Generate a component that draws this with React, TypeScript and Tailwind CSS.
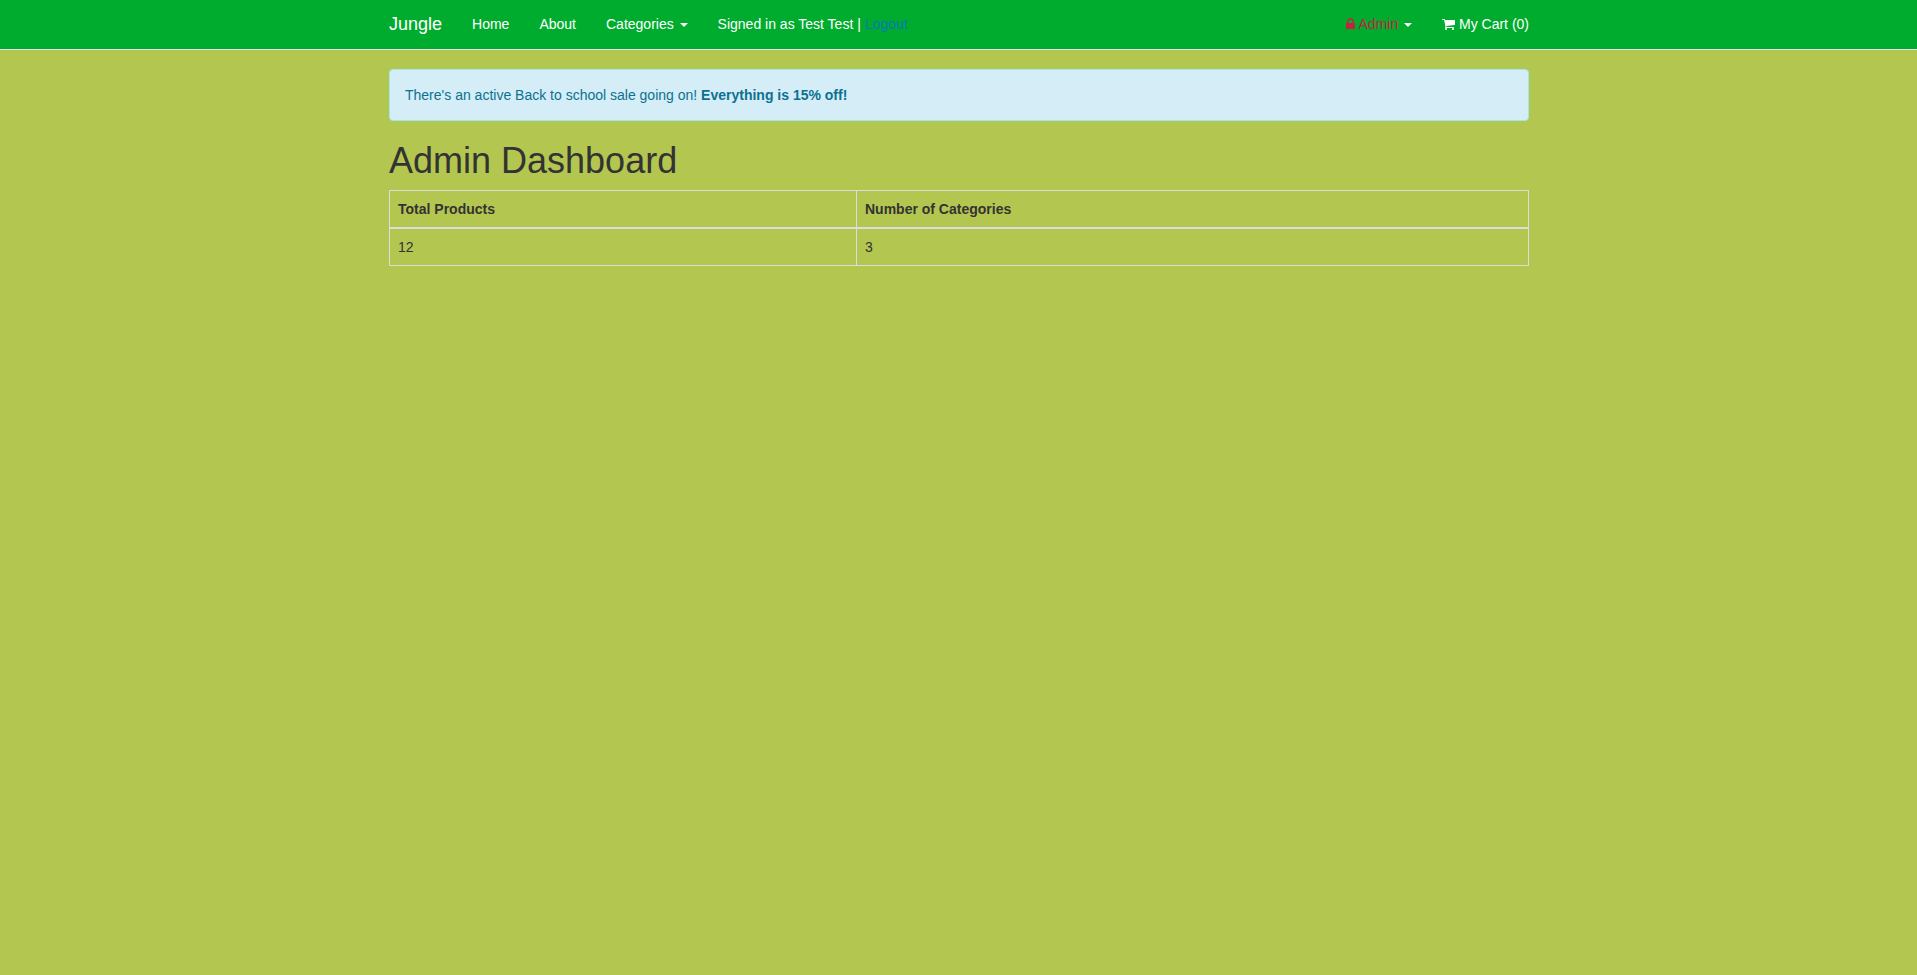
import React from "react";

function Caret() {
  return (
    <span
      aria-hidden="true"
      className="ml-0.5 inline-block h-0 w-0 border-x-4 border-t-4 border-x-transparent border-t-white align-middle"
    />
  );
}

function LockIcon() {
  return (
    <svg aria-hidden="true" viewBox="320 0 1152 1792" className="inline-block h-3.5 w-[9px] fill-current align-[-2px]">
      <path d="M640 768h512v-192q0-106-75-181t-181-75-181 75-75 181v192zm832 96v576q0 40-28 68t-68 28h-960q-40 0-68-28t-28-68v-576q0-40 28-68t68-28h32v-192q0-184 132-316t316-132 316 132 132 316v192h32q40 0 68 28t28 68z" />
    </svg>
  );
}

function CartIcon() {
  return (
    <svg aria-hidden="true" viewBox="64 0 1664 1792" className="inline-block h-3.5 w-[13px] fill-current align-[-2px]">
      <path d="M704 1536q0 52-38 90t-90 38-90-38-38-90 38-90 90-38 90 38 38 90zm896 0q0 52-38 90t-90 38-90-38-38-90 38-90 90-38 90 38 38 90zm128-1088v512q0 24-16.5 42.5t-40.5 21.5l-1044 122q13 60 13 70 0 16-24 64h920q26 0 45 19t19 45-19 45-45 19h-1024q-26 0-45-19t-19-45q0-11 8-31.5t16-36 21.5-40 15.5-29.5l-177-823h-204q-26 0-45-19t-19-45 19-45 45-19h256q16 0 28.5 6.5t19.5 15.5 13 24.5 8 26 5.5 29.5 4.5 26h1201q26 0 45 19t19 45z" />
    </svg>
  );
}

const container = "mx-auto w-full max-w-[1171px] pl-4 pr-[15px]";

export default function App() {
  return (
    <div className="min-h-screen bg-[#b3c650] font-['Liberation_Sans',Arial,sans-serif] text-sm leading-5 text-[#333333]">
      <nav className="border-b border-[#e7e7e7] bg-[#00ac2e] text-white">
        <div className={container + " flex items-center justify-between pt-3.5 pb-[15px]"}>
          <div className="flex items-center">
            <a href="#" className="mr-[15px] text-lg leading-5">Jungle</a>
            <a href="#" className="px-[15px]">Home</a>
            <a href="#" className="px-[15px]">About</a>
            <button type="button" className="px-[15px]">
              Categories <Caret />
            </button>
            <p className="px-[15px]">
              Signed in as Test Test |{" "}
              <a href="#" className="text-[#0079ba]">Logout</a>
            </p>
          </div>
          <div className="flex items-center">
            <button type="button" className="px-[15px]">
              <span className="text-[#c2233f]">
                <LockIcon /> Admin
              </span>{" "}
              <Caret />
            </button>
            <a href="#" className="pl-[15px]">
              <CartIcon /> My Cart (0)
            </a>
          </div>
        </div>
      </nav>

      <main className={container + " pt-[19px]"}>
        <div role="status" className="mb-5 rounded border border-[#9ee8f1] bg-[#d4edf6] p-[15px] text-[#0c7191]">
          There's an active Back to school sale going on! <strong>Everything is 15% off!</strong>
        </div>
        <h1 className="mb-2.5 text-4xl leading-[39px]">Admin Dashboard</h1>
        <table className="w-full border-collapse border border-[#dddddd] text-left">
          <thead>
            <tr>
              <th className="w-[41%] border border-b-2 border-[#dddddd] p-2">Total Products</th>
              <th className="border border-b-2 border-[#dddddd] p-2">Number of Categories</th>
            </tr>
          </thead>
          <tbody>
            <tr>
              <td className="border border-[#dddddd] p-2">12</td>
              <td className="border border-[#dddddd] p-2">3</td>
            </tr>
          </tbody>
        </table>
      </main>
    </div>
  );
}
